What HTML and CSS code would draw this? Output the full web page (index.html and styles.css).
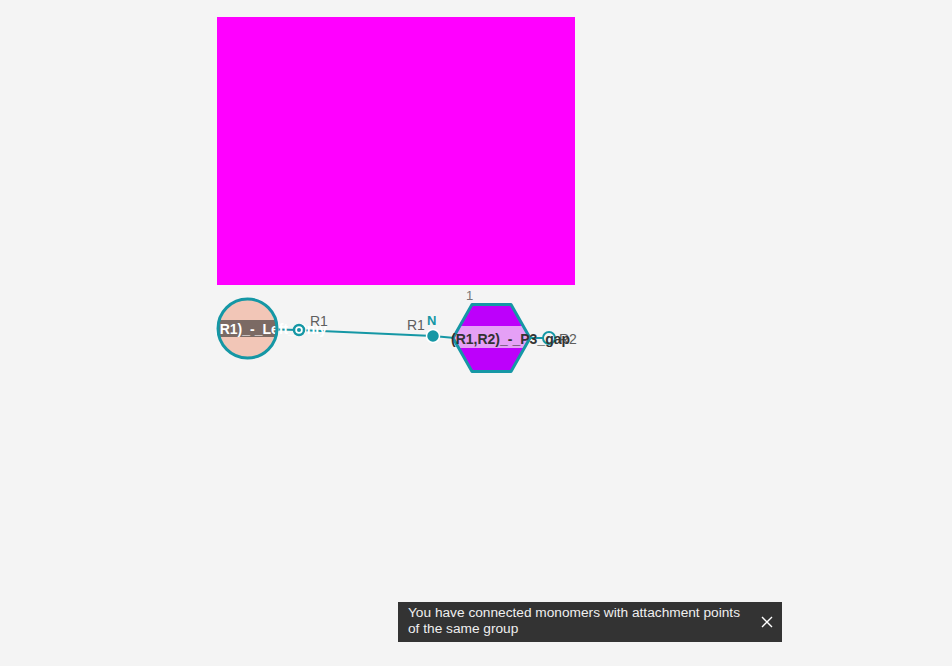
FILE: index.html
```html
<!DOCTYPE html>
<html>
<head>
<meta charset="utf-8">
<link rel="stylesheet" href="styles.css">
</head>
<body>
<div class="editor">
  <svg class="canvas" width="952" height="666" viewBox="0 0 952 666">
    <defs>
      <clipPath id="clipCircle"><circle cx="247.5" cy="328.5" r="29"/></clipPath>
      <clipPath id="clipHex"><polygon points="453,338 472,304.5 511,304.5 530,338 511,371.5 472,371.5"/></clipPath>
    </defs>
    <rect class="preview" x="217" y="17" width="358" height="268"/>

    <line class="bond" x1="299" y1="330" x2="433" y2="336"/>
    <line class="bond" x1="433" y1="336" x2="455" y2="338"/>
    <line class="bond" x1="528" y1="338" x2="544" y2="338"/>
    <line class="bond" x1="278" y1="329.5" x2="299" y2="330"/>

    <!-- left monomer -->
    <circle class="mono-circle" cx="247.5" cy="328.5" r="29.5"/>
    <rect class="band-dark" x="216" y="320" width="64" height="17" clip-path="url(#clipCircle)"/>
    <text class="name-white" x="215" y="334">(R1)_-_Left_Only</text>
    <circle class="mono-ring" cx="247.5" cy="328.5" r="29.5"/>

    <!-- right monomer -->
    <polygon class="hex" points="453,338 472,304.5 511,304.5 530,338 511,371.5 472,371.5"/>
    <rect class="band-light" x="450" y="326" width="84" height="22" clip-path="url(#clipHex)"/>
    <polygon class="hex-ring" points="453,338 472,304.5 511,304.5 530,338 511,371.5 472,371.5"/>

    <!-- attachment points -->
    <circle class="ap-open" cx="299" cy="330" r="5"/>
    <circle class="ap-dot" cx="299" cy="330" r="2"/>
    <text class="ap-label" x="310" y="326">R1</text>

    <text class="ap-label" x="407" y="330">R1</text>
    <circle class="ap-filled" cx="433" cy="336" r="6.5"/>
    <text class="ap-n" x="427" y="325">N</text>

    <circle class="ap-open2" cx="549" cy="338" r="6"/>
    <text class="ap-label" x="559" y="344">R2</text>

    <text class="num" x="466" y="300">1</text>

    <text class="name-dark" x="451" y="344">(R1,R2)_-_P3_gap</text>
  </svg>

  <div class="toast">
    <div class="toast-text">You have connected monomers with attachment points of the same group</div>
    <svg class="toast-close" width="12" height="12" viewBox="0 0 12 12">
      <path d="M1 1 L11 11 M11 1 L1 11"/>
    </svg>
  </div>
</div>
</body>
</html>
```

FILE: styles.css
```css
html, body {
  margin: 0;
  padding: 0;
  background: #f4f4f4;
}

.editor {
  position: relative;
  width: 952px;
  height: 666px;
  overflow: hidden;
  font-family: "Liberation Sans", Arial, sans-serif;
}

.canvas {
  position: absolute;
  left: 0;
  top: 0;
}

.preview {
  fill: #ff00ff;
}

.bond {
  stroke: #1597a5;
  stroke-width: 2;
}

.mono-circle {
  fill: #f2c6b7;
}

.mono-ring {
  fill: none;
  stroke: #1597a5;
  stroke-width: 3;
}

.band-dark {
  fill: #7b6a64;
}

.hex {
  fill: #bd00fb;
}

.band-light {
  fill: #e5a0f6;
}

.hex-ring {
  fill: none;
  stroke: #1597a5;
  stroke-width: 3;
  stroke-linejoin: round;
}

.ap-open {
  fill: #ffffff;
  stroke: #1597a5;
  stroke-width: 2.5;
}

.ap-dot {
  fill: #1597a5;
}

.ap-open2 {
  fill: #f4f4f4;
  stroke: #1597a5;
  stroke-width: 2;
}

.ap-filled {
  fill: #1597a5;
  stroke: #ffffff;
  stroke-width: 1.5;
}

.ap-label {
  font-family: "Liberation Sans", Arial, sans-serif;
  font-size: 14px;
  fill: #5e5e5e;
}

.ap-n {
  font-family: "Liberation Sans", Arial, sans-serif;
  font-size: 13px;
  font-weight: bold;
  fill: #1597a5;
}

.num {
  font-family: "Liberation Sans", Arial, sans-serif;
  font-size: 13px;
  fill: #777777;
}

.name-dark {
  font-family: "Liberation Sans", Arial, sans-serif;
  font-size: 14px;
  font-weight: bold;
  fill: #333333;
}

.name-white {
  font-family: "Liberation Sans", Arial, sans-serif;
  font-size: 14px;
  font-weight: bold;
  fill: #ffffff;
}

.toast {
  position: absolute;
  left: 398px;
  top: 602px;
  width: 384px;
  height: 40px;
  box-sizing: border-box;
  background: #333333;
  display: flex;
  align-items: center;
  justify-content: space-between;
  padding: 0 9px 2px 10px;
}

.toast-text {
  width: 345px;
  color: #efefef;
  font-size: 13.7px;
  line-height: 16px;
}

.toast-close {
  display: block;
  margin-top: 2px;
}

.toast-close path {
  stroke: #ffffff;
  stroke-width: 1.4;
  fill: none;
}
```
